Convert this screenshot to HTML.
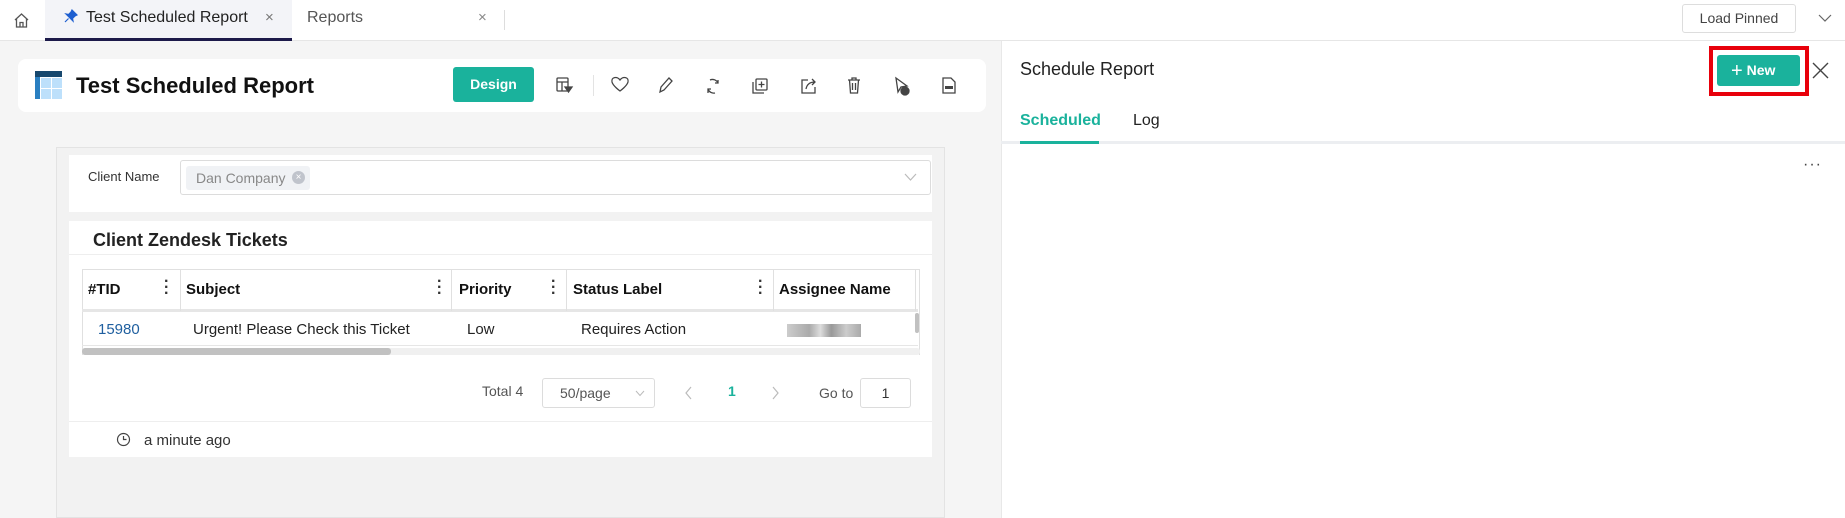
<!DOCTYPE html>
<html><head><meta charset="utf-8"><style>
*{box-sizing:border-box;margin:0;padding:0}
body{width:1845px;height:518px;overflow:hidden;background:#fff;font-family:"Liberation Sans",sans-serif;color:#222;position:relative}
.a{position:absolute}
.t{position:absolute;white-space:nowrap}
</style></head><body>
<div class="a" style="left:0;top:0;width:1845px;height:41px;background:#fff;border-bottom:1px solid #e6e6e6"></div>
<svg class="a" style="left:13px;top:12px" width="17" height="17" viewBox="0 0 17 17" fill="none" stroke="#555" stroke-width="1.3"><path d="M2 8 L8.5 2 L15 8 M3.5 6.5 V15 H13.5 V6.5 M7 15 V10.5 H10 V15"/></svg>
<div class="a" style="left:45px;top:0;width:247px;height:41px;background:#f3f4f8;border-bottom:3px solid #1c1a4a"></div>
<svg class="a" style="left:64px;top:9px" width="14" height="14" viewBox="0 0 14 14"><path d="M8 1 L13 6 L11 7 L8.5 9.5 L9 12 L2 5 L4.5 5.5 L7 3 Z M4.5 9.5 L1 13" fill="#1e5fd0" stroke="#1e5fd0" stroke-width="1.2"/></svg>
<div class="t" style="left:86px;top:9px;font-size:16px;color:#222">Test Scheduled Report</div>
<div class="t" style="left:265px;top:9px;font-size:15px;color:#777">×</div>
<div class="t" style="left:307px;top:9px;font-size:16px;color:#555">Reports</div>
<div class="t" style="left:478px;top:9px;font-size:15px;color:#888">×</div>
<div class="a" style="left:504px;top:10px;width:1px;height:20px;background:#ddd"></div>
<div class="a" style="left:1682px;top:4px;width:114px;height:29px;border:1px solid #ddd;border-radius:3px;font-size:14px;color:#444;text-align:center;line-height:27px">Load Pinned</div>
<svg class="a" style="left:1818px;top:13px" width="14" height="10" viewBox="0 0 14 10" fill="none" stroke="#666" stroke-width="1.2"><path d="M1 2 L7 8 L13 2"/></svg>

<div class="a" style="left:0;top:41px;width:1001px;height:477px;background:#f5f5f5"></div>
<div class="a" style="left:18px;top:59px;width:968px;height:53px;background:#fff;border-radius:8px"></div>
<svg class="a" style="left:35px;top:71px" width="27" height="28" viewBox="0 0 27 28"><rect x="0" y="0" width="27" height="6" fill="#17486e"/><rect x="0" y="6" width="5" height="22" fill="#2a7fc1"/><rect x="6" y="7" width="10" height="10" fill="#bde0fb"/><rect x="17" y="7" width="10" height="10" fill="#bde0fb"/><rect x="6" y="18" width="10" height="10" fill="#bde0fb"/><rect x="17" y="18" width="10" height="10" fill="#bde0fb"/></svg>
<div class="t" style="left:76px;top:73px;font-size:22px;font-weight:bold;color:#111">Test Scheduled Report</div>
<div class="a" style="left:453px;top:67px;width:81px;height:35px;background:#1ab29c;border-radius:3px;color:#fff;font-size:14px;font-weight:bold;text-align:center;line-height:35px">Design</div>
<svg class="a" style="left:0;top:0" width="1000" height="120" fill="none" stroke="#444" stroke-width="1.3">
<rect x="557" y="78" width="11" height="13" rx="1"/><path d="M557 82 H568 M562 82 V91"/><path d="M565 87 H572 L568.5 92 Z" fill="#444"/>
<path d="M620 80 C617 76 611 77 612 82 C613 86 620 91 620 91 C620 91 627 86 628 82 C629 77 623 76 620 80 Z"/>
<path d="M660 92 L661 87 L669 78 L672 81 L664 90 Z"/>
<path d="M710 80 A6 6 0 0 1 718 83 M718 80 V83 H715 M715 93 A6 6 0 0 1 708 89 M708 93 V89 H711"/>
<rect x="756" y="79" width="11" height="11" rx="1"/><path d="M753 82 V93 H764 M761.5 81.5 V87.5 M758.5 84.5 H764.5"/>
<path d="M808 80 H802 V93 H815 V87 M806 89 C807 84 810 82 815 82 M812 79 L815 82 L812 85"/>
<path d="M848 80 H860 M852 80 V78 H856 V80 M849.5 80 L850.5 93 H857.5 L858.5 80 M852.5 83 V90 M855.5 83 V90"/>
<path d="M896 78 L907 86 L901 87 L898 92 Z"/><circle cx="905" cy="91" r="4" fill="#444"/>
<path d="M943 78 H951 L955 82 V93 H943 Z"/><rect x="945" y="86" width="8" height="3" fill="#444" stroke="none"/>
</svg>
<div class="a" style="left:593px;top:75px;width:1px;height:21px;background:#e3e3e3"></div>

<div class="a" style="left:56px;top:147px;width:889px;height:371px;background:#f2f2f2;border:1px solid #e3e3e3"></div>
<div class="a" style="left:69px;top:155px;width:863px;height:57px;background:#fff"></div>
<div class="t" style="left:88px;top:169px;font-size:13px;color:#333">Client Name</div>
<div class="a" style="left:180px;top:160px;width:751px;height:35px;border:1px solid #dcdcdc;border-radius:3px;background:#fff"></div>
<div class="a" style="left:186px;top:166px;width:124px;height:24px;background:#f0f2f5;border-radius:3px"></div>
<div class="t" style="left:196px;top:170px;font-size:14px;color:#888">Dan Company</div>
<div class="a" style="left:292px;top:171px;width:13px;height:13px;border-radius:50%;background:#c0c4cc;color:#fff;font-size:10px;text-align:center;line-height:13px">×</div>
<svg class="a" style="left:904px;top:173px" width="13" height="9" viewBox="0 0 13 9" fill="none" stroke="#bbb" stroke-width="1.2"><path d="M1 1 L6.5 7 L12 1"/></svg>

<div class="a" style="left:69px;top:221px;width:863px;height:236px;background:#fff"></div>
<div class="t" style="left:93px;top:230px;font-size:18px;font-weight:bold;color:#222">Client Zendesk Tickets</div>
<div class="a" style="left:69px;top:254px;width:863px;height:1px;background:#eee"></div>
<div class="a" style="left:82px;top:269px;width:838px;height:86px;border:1px solid #e0e0e0;border-bottom:none"></div>
<div class="a" style="left:82px;top:309px;width:836px;height:3px;background:#e6e6e6"></div>
<div class="a" style="left:82px;top:345px;width:836px;height:1px;background:#e6e6e6"></div>
<div class="a" style="left:82px;top:348px;width:838px;height:7px;background:#f0f0f0;border-radius:3px"></div>
<div class="a" style="left:82px;top:348px;width:309px;height:7px;background:#c1c1c1;border-radius:3px"></div>
<div class="a" style="left:915px;top:313px;width:4px;height:20px;background:#c1c1c1;border-radius:2px"></div>
<div class="a" style="left:180px;top:269px;width:1px;height:42px;background:#e0e0e0"></div>
<div class="a" style="left:451px;top:269px;width:1px;height:42px;background:#e0e0e0"></div>
<div class="a" style="left:566px;top:269px;width:1px;height:42px;background:#e0e0e0"></div>
<div class="a" style="left:773px;top:269px;width:1px;height:42px;background:#e0e0e0"></div>
<div class="a" style="left:915px;top:269px;width:1px;height:42px;background:#e0e0e0"></div>
<div class="t" style="left:88px;top:281px;font-size:15px;font-weight:bold;color:#111">#TID</div>
<div class="t" style="left:186px;top:281px;font-size:15px;font-weight:bold;color:#111">Subject</div>
<div class="t" style="left:459px;top:281px;font-size:15px;font-weight:bold;color:#111">Priority</div>
<div class="t" style="left:573px;top:281px;font-size:15px;font-weight:bold;color:#111">Status Label</div>
<div class="t" style="left:779px;top:281px;font-size:15px;font-weight:bold;color:#111">Assignee Name</div>
<div class="t" style="left:164px;top:279px;font-size:16px;font-weight:bold;color:#333;line-height:6px;width:4px;text-align:center">·<br>·<br>·</div>
<div class="t" style="left:437px;top:279px;font-size:16px;font-weight:bold;color:#333;line-height:6px;width:4px;text-align:center">·<br>·<br>·</div>
<div class="t" style="left:551px;top:279px;font-size:16px;font-weight:bold;color:#333;line-height:6px;width:4px;text-align:center">·<br>·<br>·</div>
<div class="t" style="left:758px;top:279px;font-size:16px;font-weight:bold;color:#333;line-height:6px;width:4px;text-align:center">·<br>·<br>·</div>
<div class="t" style="left:98px;top:321px;font-size:15px;color:#1f5f9f">15980</div>
<div class="t" style="left:193px;top:321px;font-size:15px;color:#222">Urgent! Please Check this Ticket</div>
<div class="t" style="left:467px;top:321px;font-size:15px;color:#222">Low</div>
<div class="t" style="left:581px;top:321px;font-size:15px;color:#222">Requires Action</div>
<div class="a" style="left:787px;top:324px;width:74px;height:13px;background:linear-gradient(90deg,#ccc,#aaa 30%,#ddd 45%,#999 60%,#ccc 80%,#aaa)"></div>

<div class="t" style="left:482px;top:383px;font-size:14px;color:#555">Total 4</div>
<div class="a" style="left:542px;top:378px;width:113px;height:30px;border:1px solid #dcdcdc;border-radius:3px"></div>
<div class="t" style="left:560px;top:385px;font-size:14px;color:#555">50/page</div>
<svg class="a" style="left:635px;top:390px" width="10" height="7" viewBox="0 0 10 7" fill="none" stroke="#bbb"><path d="M1 1 L5 5.5 L9 1"/></svg>
<svg class="a" style="left:685px;top:386px" width="8" height="14" viewBox="0 0 8 14" fill="none" stroke="#bbb" stroke-width="1.2"><path d="M6 1 L1 7 L6 13"/></svg>
<div class="t" style="left:728px;top:383px;font-size:14px;font-weight:bold;color:#1ab29c">1</div>
<svg class="a" style="left:771px;top:386px" width="8" height="14" viewBox="0 0 8 14" fill="none" stroke="#bbb" stroke-width="1.2"><path d="M2 1 L7 7 L2 13"/></svg>
<div class="t" style="left:819px;top:385px;font-size:14px;color:#555">Go to</div>
<div class="a" style="left:860px;top:378px;width:51px;height:30px;border:1px solid #dcdcdc;border-radius:3px;font-size:14px;color:#333;text-align:center;line-height:28px">1</div>
<div class="a" style="left:69px;top:421px;width:863px;height:1px;background:#eee"></div>
<svg class="a" style="left:116px;top:432px" width="15" height="15" viewBox="0 0 15 15" fill="none" stroke="#444" stroke-width="1.2"><circle cx="7.5" cy="7.5" r="6"/><path d="M7.5 4 V7.5 H10.5"/></svg>
<div class="t" style="left:144px;top:432px;font-size:15px;color:#333">a minute ago</div>

<div class="a" style="left:1001px;top:41px;width:844px;height:477px;background:#fff;border-left:1px solid #e8e8e8"></div>
<div class="t" style="left:1020px;top:59px;font-size:18px;color:#222">Schedule Report</div>
<div class="a" style="left:1709px;top:46px;width:100px;height:50px;border:4px solid #e8000b"></div>
<div class="a" style="left:1717px;top:55px;width:83px;height:31px;background:#1ab29c;border-radius:3px;color:#fff;font-size:14px;font-weight:bold;line-height:31px;padding-left:14px"><span style="font-weight:normal;font-size:20px;vertical-align:-2px">+</span> New</div>
<svg class="a" style="left:1812px;top:62px" width="17" height="17" viewBox="0 0 17 17" stroke="#444" stroke-width="1.4"><path d="M1 1 L16 16 M16 1 L1 16"/></svg>
<div class="t" style="left:1020px;top:112px;font-size:16px;color:#1ab29c;font-weight:bold">Scheduled</div>
<div class="t" style="left:1133px;top:112px;font-size:16px;color:#222">Log</div>
<div class="a" style="left:1001px;top:141px;width:844px;height:3px;background:#eceef1"></div>
<div class="a" style="left:1020px;top:141px;width:79px;height:3px;background:#1ab29c"></div>
<div class="t" style="left:1803px;top:156px;font-size:16px;color:#444;letter-spacing:1px">···</div>
</body></html>
